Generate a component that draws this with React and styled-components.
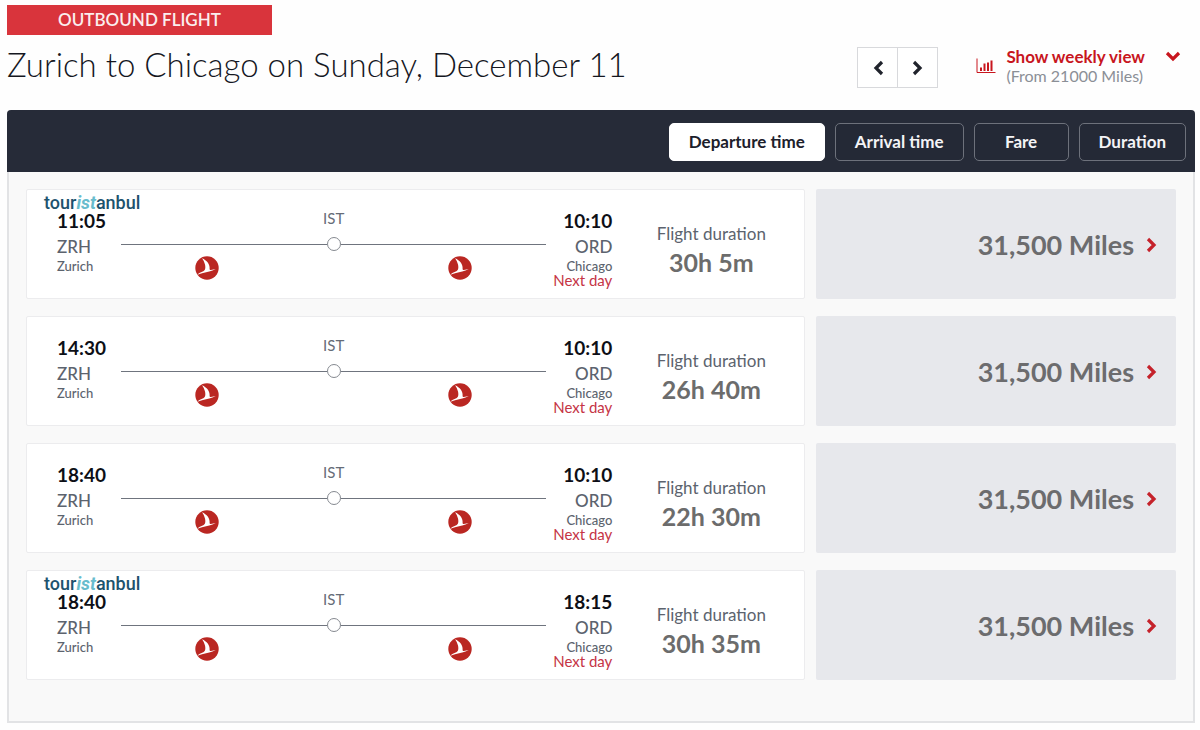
import React from "react";
import styled, { createGlobalStyle, css } from "styled-components";

const GlobalStyle = createGlobalStyle`
  * {
    box-sizing: border-box;
  }
  body {
    margin: 0;
    background: #fefefe;
    color: #15171f;
    font-family: Lato, "Open Sans", sans-serif;
  }
  button {
    font-family: inherit;
    cursor: pointer;
  }
`;

const Page = styled.main`
  padding: 5px 5px 8px 7px;
`;

const DirectionTag = styled.div`
  width: 265px;
  background: #d9343c;
  color: #fbeeee;
  font-size: 17px;
  font-weight: 600;
  line-height: 30px;
  text-align: center;
`;

const Header = styled.header`
  display: flex;
  align-items: center;
  height: 65px;
  margin-bottom: 10px;
`;

const Title = styled.h1`
  flex: 1;
  margin: 0;
  padding-bottom: 8px;
  font-size: 33px;
  font-weight: 300;
  line-height: 40px;
`;

const DayNav = styled.nav`
  display: flex;
  margin-right: 38px;
`;

const DayButton = styled.button`
  display: flex;
  align-items: center;
  justify-content: center;
  width: 41px;
  height: 41px;
  padding: 0;
  background: white;
  border: 1px solid #d8d9dc;
  & + & {
    margin-left: -1px;
  }
`;

const WeeklyButton = styled.button`
  display: flex;
  padding: 0;
  margin: 0 14px 4px 0;
  background: none;
  border: 0;
  text-align: left;
  > svg:first-child {
    margin: 11px 10px 0 0;
  }
  > svg:last-child {
    margin: 4px 0 0 20px;
  }
`;

const WeeklyLabel = styled.span`
  display: flex;
  flex-direction: column;
  color: #8b8f96;
  font-size: 16px;
  line-height: 19px;
  strong {
    color: #c8161e;
    font-size: 17px;
    font-weight: 700;
  }
`;

const Panel = styled.section`
  background: #f9f9f9;
  border: 2px solid #e2e3e5;
  border-top: 0;
  border-radius: 4px 4px 0 0;
`;

const SortBar = styled.div`
  display: flex;
  justify-content: flex-end;
  gap: 10px;
  margin: 0 -2px;
  padding: 13px 9px 11px;
  background: #262b38;
  border-radius: 4px 4px 0 0;
`;

const SortButton = styled.button`
  min-width: 95px;
  height: 38px;
  padding: 0 19px 2px;
  border: 1px solid #6d717b;
  border-radius: 5px;
  background: #242936;
  color: #f4f4f6;
  font-size: 17px;
  font-weight: 700;
  ${props =>
    props.$active &&
    css`
      background: white;
      border-color: white;
      color: #1c202b;
    `};
`;

const FlightList = styled.ul`
  display: flex;
  flex-direction: column;
  gap: 17px;
  margin: 0;
  padding: 17px 17px 41px;
  list-style: none;
`;

const FlightRow = styled.li`
  display: grid;
  grid-template-columns: minmax(0, 13fr) minmax(0, 6fr);
  gap: 11px;
`;

const FlightCard = styled.article`
  position: relative;
  display: grid;
  grid-template-columns: 64px minmax(0, 1fr) 66px 192px;
  height: 110px;
  padding: 20px 0 0 30px;
  background: white;
  border: 1px solid #ececee;
  border-radius: 2px;
`;

const TourBadge = styled.span`
  position: absolute;
  top: 5px;
  left: 17px;
  color: #1d536e;
  font-family: Roboto, sans-serif;
  font-size: 18px;
  font-weight: 500;
  line-height: 16px;
  em {
    color: #68bccd;
    font-weight: 700;
  }
`;

const Airport = styled.div`
  display: flex;
  flex-direction: column;
  align-items: ${props => (props.$end ? "flex-end" : "flex-start")};
  color: #5c636e;
  white-space: nowrap;
`;

const Time = styled.span`
  color: #0d0f16;
  font-size: 19px;
  font-weight: 700;
  line-height: 22px;
`;

const Code = styled.span`
  margin: 5px 0 3px;
  font-size: 17px;
  font-weight: 500;
  line-height: 20px;
`;

const City = styled.span`
  font-size: 13px;
  font-weight: 500;
  line-height: 12px;
`;

const NextDay = styled.span`
  color: #c53445;
  font-size: 15px;
  line-height: 16px;
`;

const Route = styled.div`
  display: flex;
  flex-direction: column;
  color: #666c77;
`;

const StopName = styled.span`
  font-size: 15px;
  line-height: 16px;
  text-align: center;
`;

const RouteLine = styled.div`
  display: flex;
  align-items: center;
  height: 14px;
  margin: 11px 0 5px;
  &::before,
  &::after {
    content: "";
    flex: 1;
    height: 1px;
    background: #6f747e;
  }
`;

const StopDot = styled.span`
  width: 14px;
  height: 14px;
  border: 1px solid #858990;
  border-radius: 50%;
`;

const Carriers = styled.div`
  display: flex;
  justify-content: space-between;
  padding: 0 74px;
`;

const Duration = styled.div`
  display: flex;
  flex-direction: column;
  align-items: center;
  padding: 12px 0 0 6px;
  color: #5c636e;
  font-size: 17px;
  line-height: 24px;
  strong {
    color: #6c6c6c;
    font-size: 25px;
    font-weight: 700;
    line-height: 32px;
  }
`;

const FareButton = styled.button`
  display: flex;
  align-items: center;
  justify-content: flex-end;
  gap: 12px;
  padding: 1px 19px 0 0;
  background: #e7e8ec;
  border: 0;
  border-radius: 2px;
  color: #6c6c6e;
  font-size: 27px;
  font-weight: 700;
`;

const Chevron = ({ d, width, height, color }) => (
  <svg width={width} height={height} viewBox={`0 0 ${width} ${height}`} aria-hidden="true">
    <path d={d} fill="none" stroke={color} strokeWidth="3.2" />
  </svg>
);

const ChartIcon = () => (
  <svg width="20" height="16" viewBox="0 0 20 16" aria-hidden="true">
    <path d="M1 0.5V14.5H19.5" fill="none" stroke="#c8161e" />
    <path
      d="M5 13V9.5M8.5 13V5.5M12 13V4.5M15.5 13V2.5"
      stroke="#c8161e"
      strokeWidth="2"
    />
  </svg>
);

const CarrierLogo = () => (
  <svg width="24" height="24" viewBox="0 0 24 24" role="img" aria-label="Turkish Airlines">
    <circle cx="12" cy="12" r="11.7" fill="#ba2722" />
    <path
      d="M7 2.2C11.8 4.2 15 8.4 14.6 12.6C14.5 13.8 14.8 14.1 15.8 13.9L20.8 13C16.4 15.4 12 16 8 17C5.4 17.7 3.6 18.6 2 18.9C3.6 17.1 6 16 8.3 15.2C10.6 14.3 10.6 11.5 10 8.6C9.4 6.2 8.5 4.1 7 2.2Z"
      fill="white"
    />
  </svg>
);

const flights = [
  { departs: "11:05", arrives: "10:10", duration: "30h 5m", tour: true },
  { departs: "14:30", arrives: "10:10", duration: "26h 40m" },
  { departs: "18:40", arrives: "10:10", duration: "22h 30m" },
  { departs: "18:40", arrives: "18:15", duration: "30h 35m", tour: true }
];

const sortOptions = ["Departure time", "Arrival time", "Fare", "Duration"];

const Flight = ({ flight }) => (
  <FlightRow>
    <FlightCard>
      {flight.tour && (
        <TourBadge>
          tour<em>ist</em>anbul
        </TourBadge>
      )}
      <Airport>
        <Time>{flight.departs}</Time>
        <Code>ZRH</Code>
        <City>Zurich</City>
      </Airport>
      <Route>
        <StopName>IST</StopName>
        <RouteLine>
          <StopDot />
        </RouteLine>
        <Carriers>
          <CarrierLogo />
          <CarrierLogo />
        </Carriers>
      </Route>
      <Airport $end>
        <Time>{flight.arrives}</Time>
        <Code>ORD</Code>
        <City>Chicago</City>
        <NextDay>Next day</NextDay>
      </Airport>
      <Duration>
        Flight duration
        <strong>{flight.duration}</strong>
      </Duration>
    </FlightCard>
    <FareButton>
      31,500 Miles
      <Chevron width={11} height={16} d="M2 2L8 8L2 14" color="#c5222b" />
    </FareButton>
  </FlightRow>
);

const App = () => {
  const [sort, setSort] = React.useState("Departure time");

  return (
    <Page>
      <GlobalStyle />
      <DirectionTag>OUTBOUND FLIGHT</DirectionTag>
      <Header>
        <Title>Zurich to Chicago on Sunday, December 11</Title>
        <DayNav>
          <DayButton aria-label="Previous day">
            <Chevron width={12} height={16} d="M10 2L4 8L10 14" color="#20232c" />
          </DayButton>
          <DayButton aria-label="Next day">
            <Chevron width={12} height={16} d="M2 2L8 8L2 14" color="#20232c" />
          </DayButton>
        </DayNav>
        <WeeklyButton>
          <ChartIcon />
          <WeeklyLabel>
            <strong>Show weekly view</strong>
            (From 21000 Miles)
          </WeeklyLabel>
          <Chevron width={16} height={12} d="M2 2L8 8L14 2" color="#c8161e" />
        </WeeklyButton>
      </Header>
      <Panel>
        <SortBar>
          {sortOptions.map(option => (
            <SortButton
              key={option}
              $active={option === sort}
              aria-pressed={option === sort}
              onClick={() => setSort(option)}
            >
              {option}
            </SortButton>
          ))}
        </SortBar>
        <FlightList>
          {flights.map(flight => (
            <Flight key={flight.departs + flight.arrives} flight={flight} />
          ))}
        </FlightList>
      </Panel>
    </Page>
  );
};

export default App;
